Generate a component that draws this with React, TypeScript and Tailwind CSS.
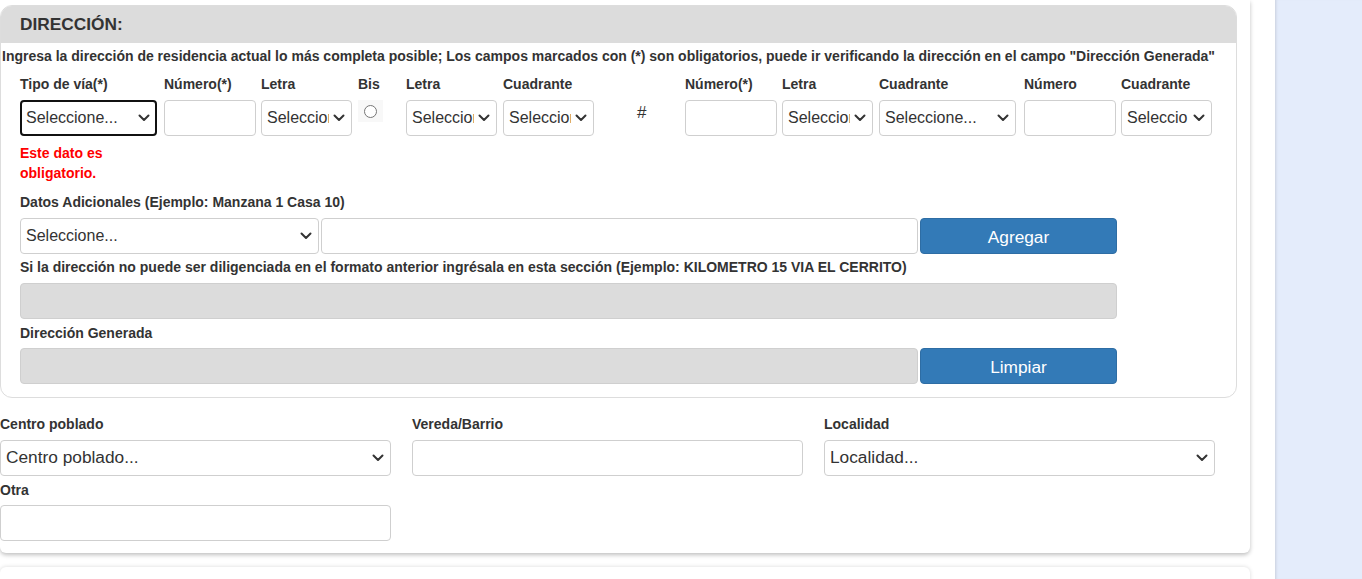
import React from "react";

const FONT = "font-['Liberation_Sans',Arial,sans-serif]";

function Chevron() {
  return (
    <svg
      className="pointer-events-none absolute right-[7px] top-1/2 -translate-y-1/2"
      width="12"
      height="8"
      viewBox="0 0 12 8"
      fill="none"
    >
      <path d="M1.5 1.5 6 6l4.5-4.5" stroke="#333" strokeWidth="2" strokeLinecap="round" strokeLinejoin="round" />
    </svg>
  );
}

function Sel({ text, cls, focused, big }: { text: string; cls: string; focused?: boolean; big?: boolean }) {
  return (
    <div className={"relative shrink-0 " + cls}>
      <select
        defaultValue="x"
        className={
          "h-[36px] w-full appearance-none rounded-[4px] bg-white pr-[22px] text-[#333] outline-none " +
          (big ? "text-[17.3px] " : "text-[16px] ") +
          (focused ? "border-2 border-[#111] pl-[4px]" : "border border-[#cfcfcf] pl-[5px]")
        }
      >
        <option value="x">{text}</option>
      </select>
      <Chevron />
    </div>
  );
}

function Inp({ cls, gray }: { cls: string; gray?: boolean }) {
  return (
    <input
      type="text"
      disabled={gray}
      className={
        "h-[36px] shrink-0 rounded-[4px] border border-[#cfcfcf] px-[6px] text-[16px] outline-none " +
        (gray ? "bg-[#dcdcdc]" : "bg-white") +
        " " +
        cls
      }
    />
  );
}

function Lbl({ children, cls }: { children: React.ReactNode; cls?: string }) {
  return <div className={"h-[20px] text-[14px] font-bold leading-[20px] text-[#333] " + (cls || "")}>{children}</div>;
}

function Btn({ children }: { children: React.ReactNode }) {
  return (
    <button className="h-[36px] w-[197px] shrink-0 rounded-[4px] border border-[#2e6da4] bg-[#337ab7] pt-[3px] text-[17.3px] text-white">
      {children}
    </button>
  );
}

export default function App() {
  return (
    <div className={"flex h-[579px] w-[1362px] overflow-hidden bg-white " + FONT}>
      <div className="w-[1275px] shrink-0">
        {/* main card */}
        <div className="w-[1250px] rounded-b-[6px] bg-white pb-[12px] pt-[5px] shadow-[0_2px_4px_rgba(0,0,0,0.25)]">
          {/* Dirección box */}
          <div className="w-[1237px] rounded-[12px] border border-[#dddddd] pb-[13px]">
            <div className="flex h-[37px] items-center rounded-t-[11px] bg-[#dcdcdc] pl-[19px] text-[17.3px] font-bold text-[#333]">
              DIRECCIÓN:
            </div>
            <div className="mt-[3px] h-[20px] pl-[1px] text-[14px] font-bold leading-[20px] text-[#333] whitespace-nowrap">
              Ingresa la dirección de residencia actual lo más completa posible; Los campos marcados con (*) son obligatorios, puede ir verificando la dirección en el campo "Dirección Generada"
            </div>
            {/* address builder row */}
            <div className="mt-[8px] flex pl-[19px]">
              <div className="w-[144px] shrink-0">
                <Lbl>Tipo de vía(*)</Lbl>
                <div className="mt-[6px]">
                  <Sel text="Seleccione..." cls="w-[137px]" focused />
                </div>
                <div className="mt-[7px] w-[120px] text-[14px] font-bold leading-[20px] text-[#ff0000]">
                  Este dato es obligatorio.
                </div>
              </div>
              <div className="w-[97px] shrink-0">
                <Lbl>Número(*)</Lbl>
                <div className="mt-[6px]">
                  <Inp cls="w-[92px]" />
                </div>
              </div>
              <div className="w-[97px] shrink-0">
                <Lbl>Letra</Lbl>
                <div className="mt-[6px]">
                  <Sel text="Seleccione..." cls="w-[91px]" />
                </div>
              </div>
              <div className="w-[48px] shrink-0">
                <Lbl>Bis</Lbl>
                <div className="mt-[6px] flex h-[22px] w-[25px] items-center justify-center bg-[#f8f8f8]">
                  <div className="h-[13px] w-[13px] rounded-full border border-[#767676] bg-white" />
                </div>
              </div>
              <div className="w-[97px] shrink-0">
                <Lbl>Letra</Lbl>
                <div className="mt-[6px]">
                  <Sel text="Seleccione..." cls="w-[91px]" />
                </div>
              </div>
              <div className="w-[182px] shrink-0">
                <Lbl>Cuadrante</Lbl>
                <div className="mt-[6px] flex items-start">
                  <Sel text="Seleccione..." cls="w-[91px]" />
                  <div className="ml-[43px] mt-[2px] text-[17px] leading-[22px] text-[#333]">#</div>
                </div>
              </div>
              <div className="w-[97px] shrink-0">
                <Lbl>Número(*)</Lbl>
                <div className="mt-[6px]">
                  <Inp cls="w-[92px]" />
                </div>
              </div>
              <div className="w-[97px] shrink-0">
                <Lbl>Letra</Lbl>
                <div className="mt-[6px]">
                  <Sel text="Seleccione..." cls="w-[91px]" />
                </div>
              </div>
              <div className="w-[145px] shrink-0">
                <Lbl>Cuadrante</Lbl>
                <div className="mt-[6px]">
                  <Sel text="Seleccione..." cls="w-[137px]" />
                </div>
              </div>
              <div className="w-[97px] shrink-0">
                <Lbl>Número</Lbl>
                <div className="mt-[6px]">
                  <Inp cls="w-[92px]" />
                </div>
              </div>
              <div className="w-[97px] shrink-0">
                <Lbl>Cuadrante</Lbl>
                <div className="mt-[6px]">
                  <Sel text="Seleccio" cls="w-[91px]" />
                </div>
              </div>
            </div>

            <div className="pl-[19px]">
              <Lbl cls="mt-[9px]">Datos Adicionales (Ejemplo: Manzana 1 Casa 10)</Lbl>
              <div className="mt-[6px] flex gap-[2px]">
                <Sel text="Seleccione..." cls="w-[299px]" />
                <Inp cls="w-[597px]" />
                <Btn>Agregar</Btn>
              </div>
              <Lbl cls="mt-[3px]">
                Si la dirección no puede ser diligenciada en el formato anterior ingrésala en esta sección (Ejemplo: KILOMETRO 15 VIA EL CERRITO)
              </Lbl>
              <div className="mt-[6px]">
                <Inp cls="w-[1097px]" gray />
              </div>
              <Lbl cls="mt-[4px]">Dirección Generada</Lbl>
              <div className="mt-[5px] flex gap-[2px]">
                <Inp cls="w-[898px]" gray />
                <Btn>Limpiar</Btn>
              </div>
            </div>
          </div>

          {/* lower fields */}
          <div className="mt-[16px] flex gap-[21px]">
            <div className="w-[391px]">
              <Lbl>Centro poblado</Lbl>
              <div className="mt-[6px]">
                <Sel text="Centro poblado..." cls="w-[391px]" big />
              </div>
              <Lbl cls="mt-[4px]">Otra</Lbl>
              <div className="mt-[5px]">
                <Inp cls="w-[391px]" />
              </div>
            </div>
            <div className="w-[391px]">
              <Lbl>Vereda/Barrio</Lbl>
              <div className="mt-[6px]">
                <Inp cls="w-[391px]" />
              </div>
            </div>
            <div className="w-[391px]">
              <Lbl>Localidad</Lbl>
              <div className="mt-[6px]">
                <Sel text="Localidad..." cls="w-[391px]" big />
              </div>
            </div>
          </div>
        </div>

        {/* next card */}
        <div className="mt-[14px] h-[40px] w-[1250px] rounded-t-[6px] bg-white shadow-[0_0_4px_rgba(0,0,0,0.15)]" />
      </div>
      <div className="flex-1 bg-[#e4ecfb] shadow-[inset_3px_0_3px_-2px_rgba(0,0,0,0.12)]" />
    </div>
  );
}
